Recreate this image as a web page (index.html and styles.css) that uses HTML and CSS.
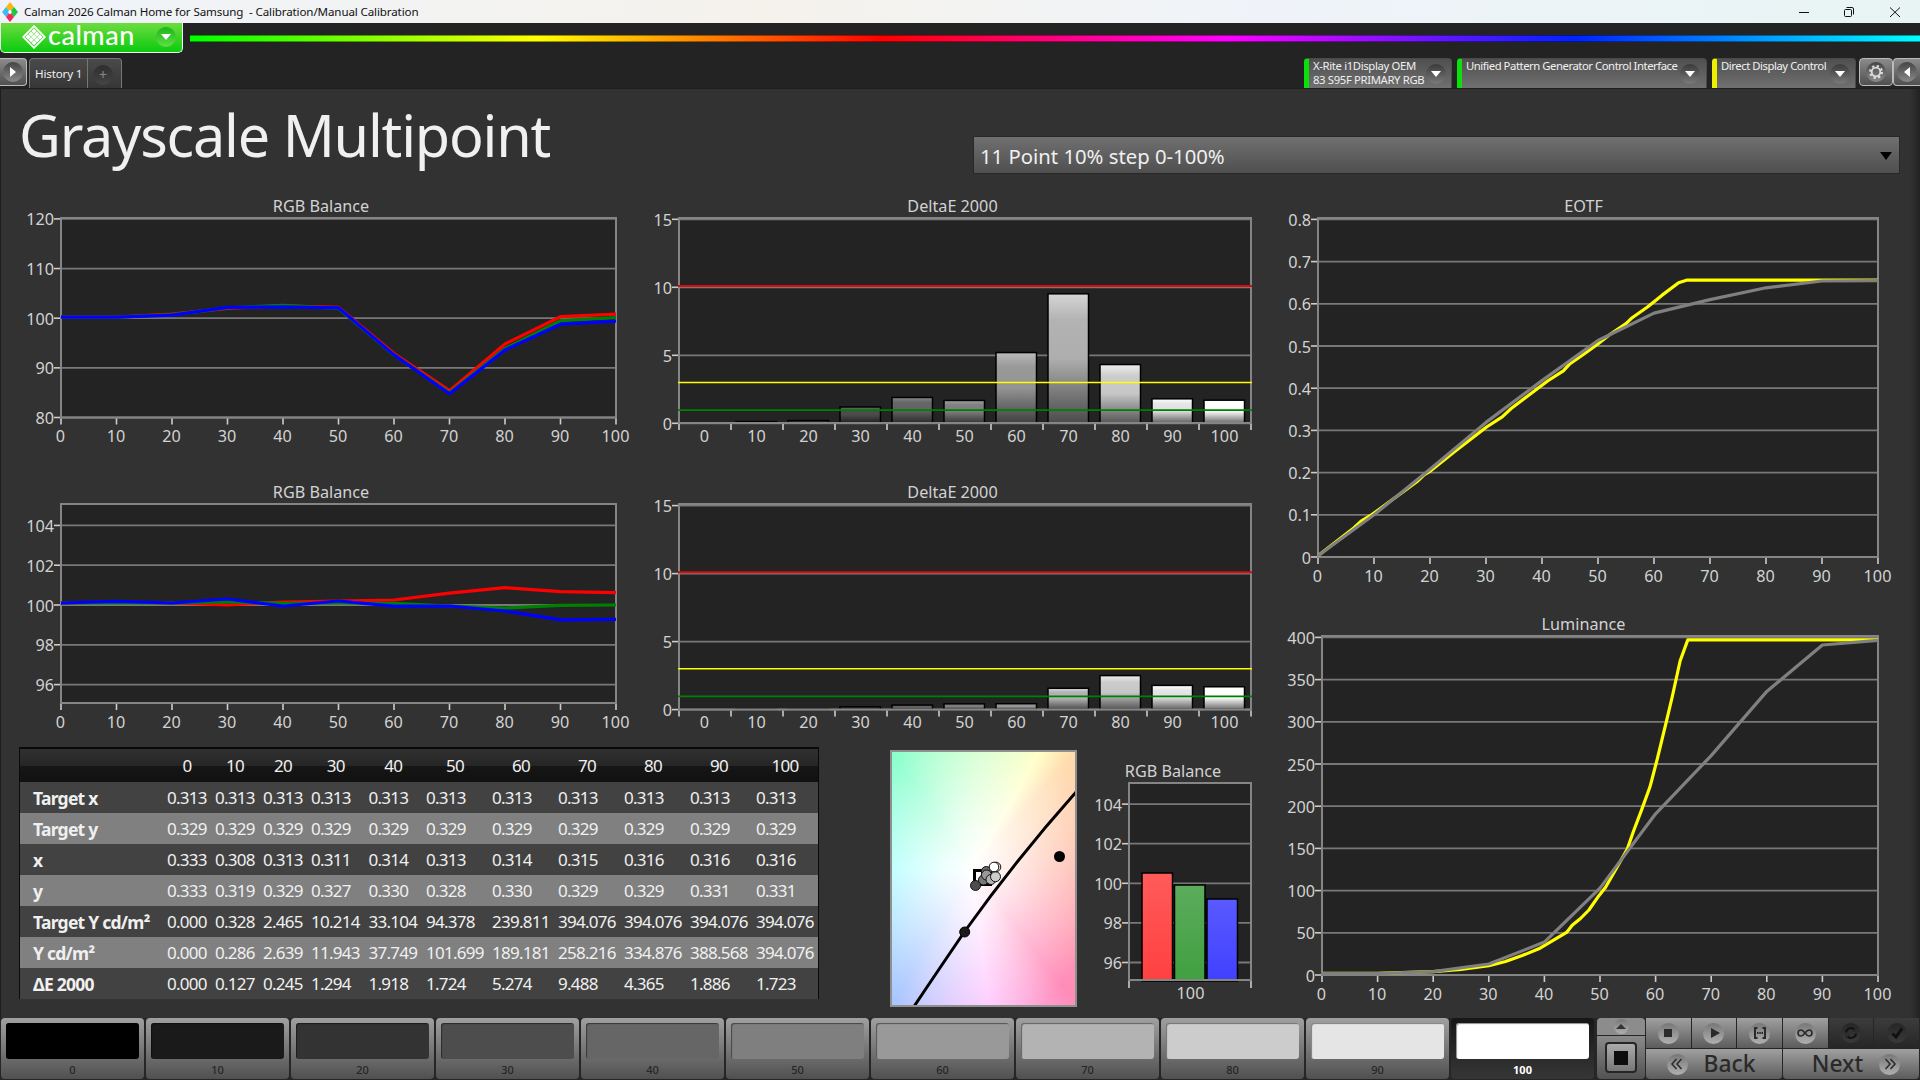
FILE: index.html
```html
<!DOCTYPE html>
<html lang="en">
<head>
    <meta charset="UTF-8">
    <meta name="viewport" content="width=device-width, initial-scale=1.0">
    <title>Calman 2026 Calman Home for Samsung</title>
    <link rel="stylesheet" href="styles.css">
</head>
<body>
    <div class="titlebar">
        <svg class="app-icon" width="16" height="20" viewBox="0 0 16 20">
            <path d="M8 0l4 5-4 5-4-5z" fill="#fbb616"/>
            <path d="M12 5l4 5-4 5-4-5z" fill="#1ec73c"/>
            <path d="M4 5l4 5-4 5-4-5z" fill="#3dbcf0"/>
            <path d="M8 10l4 5-4 5-4-5z" fill="#f0265c"/>
            <path d="M8 7.500l2 2.500-2 2.500-2-2.500z" fill="#fff"/>
        </svg>
        <span class="titlebar-text">Calman 2026 Calman Home for Samsung&nbsp; - Calibration/Manual Calibration</span>
        <svg class="window-buttons" width="110" height="20" viewBox="1795 0 110 20" fill="none" stroke="#111">
            <path d="M1799 10.500h10"/>
            <rect x="1844.500" y="7.500" width="7" height="7" rx="1"/>
            <path d="M1846.500 5.500h5.500a1.500 1.500 0 0 1 1.500 1.500v5.500"/>
            <path d="M1890 5.500l10 9.500M1900 5.500l-10 9.500"/>
        </svg>
    </div>

    <header class="brand-row">
        <div class="brand">
            <svg class="brand-mark" width="24" height="24" viewBox="0 0 24 24">
                <path d="M12 1.200L22.800 12 12 22.800 1.200 12z" fill="none" stroke="#fff" stroke-width="1.800"/>
                <g fill="#fff">
                    <path d="M12 3.500l2.700 2.700L12 8.900 9.300 6.200z"/>
                    <path d="M9 6.500l2.700 2.700L9 11.900 6.300 9.200zM15 6.500l2.700 2.700L15 11.900l-2.700-2.700z"/>
                    <path d="M6 9.300l2.700 2.700L6 14.700 3.300 12zM12 9.300l2.700 2.700-2.700 2.700L9.300 12zM18 9.300l2.700 2.700-2.700 2.700-2.700-2.700z"/>
                    <path d="M9 12.100l2.700 2.700L9 17.500l-2.700-2.700zM15 12.100l2.700 2.700-2.700 2.700-2.700-2.700z"/>
                    <path d="M12 15.100l2.700 2.700-2.700 2.700-2.700-2.700z"/>
                </g>
            </svg>
            <span class="brand-name">calman</span>
            <span class="round green"><i class="tri down"></i></span>
        </div>
        <div class="rainbow"></div>
    </header>

    <nav class="tab-row">
        <div class="side-btn left"><span class="round"><i class="tri right"></i></span></div>
        <div class="tab">History 1</div>
        <div class="tab add"><span class="round dark">+</span></div>
        <div class="devices">
            <div class="device green meter"><p>X-Rite i1Display OEM<br>83 S95F PRIMARY RGB</p><span class="round shade"><i class="tri down"></i></span></div>
            <div class="device green source"><p>Unified Pattern Generator Control Interface</p><span class="round shade"><i class="tri down"></i></span></div>
            <div class="device yellow display"><p>Direct Display Control</p><span class="round shade"><i class="tri down"></i></span></div>
        </div>
        <div class="side-btn gear">
            <span class="round">
                <svg width="16" height="16" viewBox="-8 -8 16 16" fill="none" stroke="#ddd">
                    <circle r="4.300" stroke-width="1.800"/>
                    <circle r="6" stroke-width="2" stroke-dasharray="2.300 2.412"/>
                </svg>
            </span>
        </div>
        <div class="side-btn right"><span class="round"><i class="tri left"></i></span></div>
    </nav>

    <main>
        <section class="page-head">
            <h1>Grayscale Multipoint</h1>
            <div class="select">11 Point 10% step 0-100%<i class="tri down"></i></div>
        </section>

        <section class="board">
            <div class="board-left">
                <div class="chart-row first">
                    <svg id="rgb-top" width="640" height="286" viewBox="0 190 640 286"></svg>
                    <svg id="de-top" width="630" height="286" viewBox="640 190 630 286"></svg>
                </div>
                <div class="chart-row second">
                    <svg id="rgb-bottom" width="640" height="264" viewBox="0 476 640 264"></svg>
                    <svg id="de-bottom" width="630" height="264" viewBox="640 476 630 264"></svg>
                </div>
                <div class="data-row">
                    <table>
                        <thead><tr id="table-head"></tr></thead>
                        <tbody id="table-body"></tbody>
                    </table>
                    <div class="cie">
                        <svg width="183" height="253" viewBox="892 752 183 253">
                            <path d="M913 1008Q935 975 965 931Q1018 857 1077 791" fill="none" stroke="#000" stroke-width="3"/>
                            <circle cx="1059.500" cy="856.500" r="5.500"/>
                            <circle cx="964.700" cy="932" r="5" fill="#1a1a1a" stroke="#000"/>
                            <rect x="974.500" y="870.500" width="16" height="14" fill="none" stroke="#000" stroke-width="3"/>
                            <g stroke="#111" stroke-width="1">
                                <circle cx="975.500" cy="885.500" r="5" fill="#4d4d4d"/>
                                <circle cx="986.300" cy="871.500" r="5" fill="#666"/>
                                <circle cx="983.500" cy="880" r="5" fill="#777"/>
                                <circle cx="986.500" cy="875" r="5" fill="#999"/>
                                <circle cx="991" cy="879.500" r="5" fill="#b2b2b2"/>
                                <circle cx="995.500" cy="876.700" r="5" fill="#ccc"/>
                                <circle cx="996" cy="867" r="4.800" fill="#e5e5e5"/>
                                <circle cx="994" cy="867" r="4.800" fill="#fff"/>
                            </g>
                        </svg>
                    </div>
                    <svg id="rgb-small" width="193" height="278" viewBox="1077 740 193 278"></svg>
                </div>
            </div>
            <div class="board-right">
                <svg id="eotf" width="650" height="410" viewBox="1270 190 650 410"></svg>
                <svg id="luminance" width="650" height="418" viewBox="1270 600 650 418"></svg>
            </div>
        </section>
    </main>

    <footer>
        <div class="patterns" id="patterns"></div>
        <div class="stop-panel">
            <div class="stop-up"><span class="round light"><i class="tri up"></i></span></div>
            <div class="stop-main"><div class="stop-btn"><i></i></div></div>
        </div>
        <div class="controls">
            <div class="ctl"><span class="round light"><svg width="20" height="20" viewBox="0 0 20 20"><rect x="6" y="6" width="8" height="8"/></svg></span></div>
            <div class="ctl"><span class="round light"><svg width="20" height="20" viewBox="0 0 20 20"><path d="M7 5l9 5-9 5z"/></svg></span></div>
            <div class="ctl"><span class="round light"><svg width="20" height="20" viewBox="0 0 20 20"><path d="M7.500 5H5v10h2.500M12.500 5H15v10h-2.500" fill="none" stroke="#2a2a2a" stroke-width="2"/><path d="M7 9h1.500v2H7zM9.300 9h1.500v2H9.300zM11.500 9H13v2h-1.500z"/></svg></span></div>
            <div class="ctl"><span class="round light"><svg width="20" height="20" viewBox="0 0 20 20"><path d="M10 10c-1.500-2-2.500-3-4-3a3 3 0 0 0 0 6c1.500 0 2.500-1 4-3s2.500-3 4-3a3 3 0 0 1 0 6c-1.500 0-2.500-1-4-3z" fill="none" stroke="#2a2a2a" stroke-width="1.600"/></svg></span></div>
            <div class="ctl off"><span class="round dim"><svg width="20" height="20" viewBox="0 0 20 20"><path d="M5 9.500a5 5 0 0 1 8.500-3M15 10.500a5 5 0 0 1-8.500 3" fill="none" stroke="#111" stroke-width="2"/><path d="M15.500 4v5h-5zM4.500 16v-5h5z"/></svg></span></div>
            <div class="ctl off"><span class="round dim"><svg width="20" height="20" viewBox="0 0 20 20"><path d="M5.500 10.500l3.500 3.500 6-8.500" fill="none" stroke="#111" stroke-width="3"/></svg></span></div>
            <div class="nav-btn"><span class="round light"><svg width="20" height="20" viewBox="0 0 20 20"><path d="M9.500 5l-4.500 5 4.500 5M14.500 5L10 10l4.500 5" fill="none" stroke="#2a2a2a" stroke-width="1.500"/></svg></span><b>Back</b></div>
            <div class="nav-btn next"><b>Next</b><span class="round light"><svg width="20" height="20" viewBox="0 0 20 20"><path d="M5.500 5l4.500 5-4.500 5M10.500 5l4.500 5-4.500 5" fill="none" stroke="#2a2a2a" stroke-width="1.500"/></svg></span></div>
        </div>
    </footer>
    <script src="charts.js"></script>
</body>
</html>
```
FILE: styles.css
```css
* {
    margin: 0;
    padding: 0;
    box-sizing: border-box;
}

body {
    width: 1920px;
    height: 1080px;
    overflow: hidden;
    background-color: #232323;
    font-family: "Noto Sans", "Open Sans", sans-serif;
    color: #f0f0f0;
}

svg {
    display: block;
}

/* window title bar */
.titlebar {
    display: flex;
    align-items: center;
    height: 23px;
    padding-left: 2px;
    background: linear-gradient(to right, #eff3f9, #f5f2ec 40%, #eff3f9 66%, #e8f4f4);
    color: #111;
}

.titlebar-text {
    margin-left: 6px;
    font-size: 11.600px;
    letter-spacing: -0.130px;
    white-space: nowrap;
}

.window-buttons {
    margin-left: auto;
    margin-right: 15px;
}

/* round glyph buttons */
.round {
    display: flex;
    align-items: center;
    justify-content: center;
    flex: none;
    width: 20px;
    height: 20px;
    border-radius: 50%;
    background: linear-gradient(#454545, #8b8b8b);
}

.round.green {
    background: linear-gradient(#1bb51b, #5fe043);
}

.round.shade {
    background: linear-gradient(#3a3a3a, #7a7a7a);
}

.round.dark {
    background: linear-gradient(#2e2e2e, #454545);
    color: #888;
    font-size: 14px;
    line-height: 20px;
}

.round.light {
    width: 21px;
    height: 21px;
    background: linear-gradient(#777, #b0b0b0);
}

.round.dim {
    background: linear-gradient(#262626, #3a3a3a);
}

.tri {
    width: 0;
    height: 0;
    border: 5px solid transparent;
}

.tri.down {
    border-top: 6px solid #fff;
    border-bottom: 0;
}

.tri.up {
    border-bottom: 5px solid #333;
    border-top: 0;
}

.tri.right {
    border-left: 6px solid #fff;
    border-right: 0;
}

.tri.left {
    border-right: 6px solid #fff;
    border-left: 0;
}

/* logo and colour strip */
.brand-row {
    display: flex;
    height: 35px;
}

.brand {
    display: flex;
    align-items: center;
    width: 183px;
    height: 30px;
    padding: 0 6px 1px 21px;
    border: 1px solid #e9ffe9;
    border-top: 0;
    border-radius: 0 0 5px 5px;
    background: linear-gradient(#6ddc3e, #0bca10);
}

.brand-name {
    margin: -4px auto 0 2px;
    font-family: "Lato", sans-serif;
    font-weight: 500;
    font-size: 27px;
    line-height: 28px;
    letter-spacing: 0.500px;
    color: #fff;
}

.rainbow {
    flex: 1;
    height: 7px;
    margin: 12px 0 0 7px;
    border: 1px solid rgba(0, 0, 0, 0.4);
    border-width: 1px 0;
    background: linear-gradient(to right, #0f0, #ff0, #f00, #f0f, #0022ff, #0ff);
    background-origin: border-box;
}

/* tabs and devices */
.tab-row {
    display: flex;
    height: 30px;
    font-size: 12px;
}

.side-btn {
    display: flex;
    align-items: center;
    justify-content: center;
    height: 28px;
    border: 1px solid #bbb;
    border-radius: 4px;
    background: linear-gradient(#8b8b8b, #505050);
}

.side-btn.left {
    width: 27px;
    border-left: 0;
    border-radius: 0 4px 4px 0;
    margin-right: 2px;
}

.side-btn.gear {
    width: 34px;
    margin-left: 3px;
}

.side-btn.right {
    width: 27px;
    border-right: 0;
    border-radius: 4px 0 0 4px;
}

.tab {
    width: 59px;
    height: 30px;
    line-height: 30px;
    padding-left: 5px;
    border: 1px solid #777;
    border-bottom: 0;
    border-radius: 4px 0 0 0;
    background: linear-gradient(#4a4a4a, #363636);
    font-size: 11.600px;
    letter-spacing: -0.150px;
    white-space: nowrap;
}

.tab.add {
    width: 34px;
    padding: 6px 0 0 5px;
    border-left: 0;
    border-radius: 0 4px 0 0;
}

.tab.add .round {
    padding-bottom: 1px;
}

.devices {
    display: flex;
    gap: 5px;
    margin-left: auto;
}

.device {
    display: flex;
    justify-content: space-between;
    height: 30px;
    padding: 0 5px 0 4px;
    border: 1px solid #4a4a4a;
    border-bottom: 0;
    border-left: 5px solid #0be00b;
    border-radius: 4px 4px 0 0;
    background: linear-gradient(#4f4f4f, #707070);
    font-size: 11.300px;
    line-height: 14px;
    letter-spacing: -0.450px;
    white-space: nowrap;
}

.device .round {
    margin-top: 5px;
}

.device.yellow {
    border-left-color: #eeee00;
}

.meter {
    width: 148px;
}

.meter p {
    letter-spacing: -0.350px;
}

.source {
    width: 250px;
}

/* page */
.source {
    padding-right: 6px;
}

.display {
    width: 144px;
}

main {
    height: 930px;
    border-top: 1px solid #1e1e1e;
    border-left: 1px solid #1e1e1e;
    background: linear-gradient(to right, transparent 1909px, #222) #323232;
}

.page-head {
    display: flex;
    justify-content: space-between;
    height: 101px;
    padding: 0 20px 0 18px;
}

h1 {
    margin-top: 6px;
    font-weight: 400;
    font-size: 57.500px;
    line-height: 80px;
    letter-spacing: -1.200px;
}

.select {
    display: flex;
    align-items: center;
    justify-content: space-between;
    width: 927px;
    height: 38px;
    margin-top: 47px;
    padding: 1px 7px 0 6px;
    border: 1px solid #282828;
    background: linear-gradient(#707070, #4f4f4f);
    font-size: 20.300px;
}

.select .tri {
    border-width: 8px 6px 0;
    border-top-color: #000;
}

.board {
    display: flex;
    margin-left: -1px;
}

.board-left {
    width: 1270px;
}

.chart-row {
    display: flex;
}

.data-row {
    display: flex;
    height: 278px;
}

/* chart drawing */
svg text {
    font-size: 16.200px;
    fill: #d2d2d2;
}

.plot {
    fill: #232323;
}

.frame {
    fill: none;
    stroke: #858585;
    stroke-width: 2;
}

.grid {
    stroke: #787878;
    stroke-width: 1.800;
}

.tick {
    stroke: #ccc;
    stroke-width: 1.600;
}

.curve {
    fill: none;
    stroke-width: 3.200;
    stroke-linejoin: round;
}

/* readings table */
table {
    width: 800px;
    height: 252px;
    margin: 7px 0 0 19px;
    border: 1px solid #0a0a0a;
    border-top-width: 2px;
    border-bottom: 0;
    border-collapse: separate;
    border-spacing: 0;
    table-layout: fixed;
    flex: none;
    font-size: 17px;
    line-height: 20px;
}

thead tr {
    height: 33px;
    background: linear-gradient(#303030, #262626 50%, #161616 51%, #111);
}

th {
    padding-top: 1px;
    font-weight: 400;
    letter-spacing: -0.700px;
}

tbody tr {
    height: 31px;
    background-color: #424242;
}

tbody tr:nth-child(even) {
    background-color: #808080;
}

td {
    padding: 1px 0 0 4px;
    letter-spacing: -0.720px;
    white-space: nowrap;
}

td.name {
    padding-left: 13px;
    font-weight: 700;
    font-size: 17.500px;
    letter-spacing: -0.750px;
}

/* chromaticity view */
.cie {
    width: 187px;
    height: 257px;
    margin: 10px 0 0 71px;
    border: 2px solid #909090;
    flex: none;
    background:
        radial-gradient(ellipse 125px 165px at 80px 118px, #fff, rgba(255, 255, 255, 0.800) 25%, rgba(255, 255, 255, 0) 100%),
        conic-gradient(from 0deg at 80px 118px, #c4ffc4, #ffffc0 30deg, #ffdcae 41deg, #ffb8ac 90deg, #ff8cb8 142deg, #ffc4ff 173deg, #a8c6ff 211deg, #9cffff 270deg, #80ffc8 326deg, #c4ffc4 360deg);
}

/* pattern bar */
footer {
    display: flex;
    height: 62px;
    background-color: #262626;
}

.patterns {
    display: flex;
    gap: 2px;
    padding-left: 1px;
    margin-right: 3px;
}

.pattern {
    width: 143px;
    height: 61px;
    padding: 5px;
    border-radius: 4px;
    background: linear-gradient(#a0a0a0, #505050);
    color: #262626;
    font-size: 11px;
    font-weight: 500;
    line-height: 21px;
    text-align: center;
}

.swatch {
    height: 36px;
    border-radius: 3px;
    box-shadow: inset 1px 1px 1px rgba(0, 0, 0, 0.450);
}

.pattern.active {
    background: linear-gradient(#161616, #363636);
    color: #fff;
    font-weight: 700;
}

.stop-panel {
    width: 48px;
    height: 61px;
    margin-right: 1px;
}

.stop-up {
    display: flex;
    justify-content: center;
    align-items: center;
    height: 17px;
    border-radius: 4px 4px 0 0;
    background-color: #8c8c8c;
}

.stop-up .round {
    width: 15px;
    height: 15px;
}

.stop-main {
    height: 43px;
    margin-top: 1px;
    padding: 6px 8px;
    border-radius: 0 0 4px 4px;
    background: linear-gradient(#8a8a8a, #525252);
}

.stop-btn {
    display: flex;
    align-items: center;
    justify-content: center;
    width: 32px;
    height: 31px;
    border: 2px solid #262626;
    border-radius: 4px;
    background: linear-gradient(#aaa, #777);
}

.stop-btn i {
    width: 14px;
    height: 14px;
    background-color: #0c0c0c;
}

.controls {
    display: grid;
    grid-template-columns: repeat(6, 1fr);
    grid-template-rows: 30px 30px;
    gap: 1px;
    width: 273px;
    height: 61px;
}

.ctl,
.nav-btn {
    display: flex;
    align-items: center;
    justify-content: center;
    background: linear-gradient(#a0a0a0, #5c5c5c);
}

.ctl svg {
    fill: #2a2a2a;
}

.ctl.off {
    background: linear-gradient(#3c3c3c, #262626);
}

.nav-btn {
    grid-column: span 3;
    gap: 16px;
    padding-right: 6px;
    color: #2a2a2a;
    border-radius: 0 0 4px 4px;
}

.nav-btn.next {
    padding: 0 0 0 10px;
}

.nav-btn b {
    font-size: 22.800px;
    font-weight: 500;
    line-height: 30px;
}
```
FILE: charts.js
```js
var LEVELS = [0, 10, 20, 30, 40, 50, 60, 70, 80, 90, 100];
var NS = 'http://www.w3.org/2000/svg';

function add(svg, tag, attrs, text) {
    var el = document.createElementNS(NS, tag);
    for (var key in attrs) {
        el.setAttribute(key, attrs[key]);
    }
    if (text !== undefined) {
        el.textContent = text;
    }
    svg.appendChild(el);
    return el;
}

// frame, grid, ticks and labels shared by every chart
function drawBase(svg, c) {
    add(svg, 'text', { x: c.titleX, y: c.top - 6, 'text-anchor': 'middle' }, c.title);
    add(svg, 'rect', { 'class': 'plot', x: c.left, y: c.top, width: c.right - c.left, height: c.bottom - c.top });
    c.rows.forEach(function (r) {
        var y = c.y(r);
        add(svg, 'line', { 'class': 'grid', x1: c.left, x2: c.right, y1: y, y2: y });
        add(svg, 'line', { 'class': 'tick', x1: c.left - 7, x2: c.left - 1, y1: y, y2: y });
        add(svg, 'text', { x: c.left - 7, y: y + 6.5, 'text-anchor': 'end' }, r);
    });
}

function drawFrame(svg, c) {
    add(svg, 'rect', { 'class': 'frame', x: c.left, y: c.top, width: c.right - c.left, height: c.bottom - c.top });
}

function drawLines(id, c) {
    var svg = document.getElementById(id);
    var step = (c.right - c.left) / 100;
    drawBase(svg, c);
    drawFrame(svg, c);
    LEVELS.forEach(function (l) {
        var x = c.left + l * step;
        add(svg, 'line', { 'class': 'tick', x1: x, x2: x, y1: c.bottom + 1, y2: c.bottom + 7 });
        add(svg, 'text', { x: x - 0.5, y: c.bottom + 24.5, 'text-anchor': 'middle' }, l);
    });
    c.series.forEach(function (s) {
        var pts = s.data.map(function (p, i) {
            var px = p.length ? p[0] : i * 10;
            var py = p.length ? p[1] : p;
            return (c.left + px * step).toFixed(1) + ',' + c.y(py).toFixed(1);
        });
        add(svg, 'polyline', { 'class': 'curve', points: pts.join(' '), stroke: s.color });
    });
}

function scale(zero, perUnit, base) {
    return function (v) {
        return zero - (v - (base || 0)) * perUnit;
    };
}

drawLines('rgb-top', {
    title: 'RGB Balance', titleX: 321, left: 61, right: 616, top: 218, bottom: 417.5,
    rows: [80, 90, 100, 110, 120], y: scale(417.5, 4.965, 80),
    series: [
        { color: '#f00', data: [100.2, 100.2, 100.8, 102, 102.5, 102.2, 92.9, 85.4, 94.8, 100.3, 100.8] },
        { color: '#008000', data: [100.2, 100.2, 100.7, 102.1, 102.6, 102, 92.6, 85, 93.9, 99.5, 100.1] },
        { color: '#00f', data: [100.2, 100.2, 100.6, 102.2, 102.3, 102.1, 92.6, 84.8, 93.6, 98.8, 99.4] }
    ]
});

drawLines('rgb-bottom', {
    title: 'RGB Balance', titleX: 321, left: 61, right: 616, top: 504, bottom: 703,
    rows: [96, 98, 100, 102, 104], y: scale(605, 19.9, 100),
    series: [
        { color: '#f00', data: [100.1, 100.15, 100.1, 100, 100.15, 100.2, 100.25, 100.6, 100.87, 100.67, 100.62] },
        { color: '#008000', data: [100.1, 100.1, 100.1, 100.15, 100.08, 100.1, 100.08, 99.95, 99.85, 99.98, 100] },
        { color: '#00f', data: [100.1, 100.18, 100.1, 100.3, 99.95, 100.2, 99.94, 99.95, 99.7, 99.25, 99.28] }
    ]
});

drawLines('eotf', {
    title: 'EOTF', titleX: 1583.5, left: 1318, right: 1878, top: 218, bottom: 557,
    rows: [0, 0.1, 0.2, 0.3, 0.4, 0.5, 0.6, 0.7, 0.8], y: scale(557, 422),
    series: [
        { color: '#ff0', data: [[0, 0.003], [4.2, 0.046], [6.4, 0.069], [7.7, 0.085], [9.7, 0.101], [17.7, 0.179], [19, 0.195], [20, 0.203], [24.3, 0.249], [30.1, 0.308], [32.9, 0.332], [34.5, 0.352], [37.4, 0.381], [41, 0.417], [43.8, 0.441], [45, 0.458], [47.2, 0.478], [49.8, 0.503], [52, 0.526], [55, 0.553], [56.1, 0.567], [58.9, 0.593], [61.4, 0.62], [64.4, 0.65], [65.8, 0.656], [100, 0.656]] },
        { color: '#808080', data: [0.003, 0.1, 0.208, 0.319, 0.418, 0.513, 0.578, 0.61, 0.638, 0.654, 0.655] }
    ]
});

drawLines('luminance', {
    title: 'Luminance', titleX: 1583.5, left: 1322, right: 1878, top: 636, bottom: 975,
    rows: [0, 50, 100, 150, 200, 250, 300, 350, 400], y: scale(975, 0.844),
    series: [
        { color: '#ff0', data: [[0, 2], [10, 2], [20, 4], [25, 6.5], [30, 11], [33, 16], [36, 23], [39, 31], [44, 50.5], [45, 59], [46.5, 67], [48, 77], [49.8, 94], [51, 104], [53, 127], [54.9, 149], [56, 170], [57.5, 196], [59, 223], [60.3, 256], [62, 302], [63, 330], [64.4, 372], [65.8, 397], [100, 397]] },
        { color: '#808080', data: [1.5, 1.5, 4, 13, 39, 103, 191, 260, 336, 391, 396.5] }
    ]
});

function drawBars(id, c) {
    var svg = document.getElementById(id);
    var slot = (c.right - c.left) / 11;
    var defs = add(svg, 'defs', {});
    drawBase(svg, c);
    c.values.forEach(function (v, i) {
        var g = Math.round(i * 25.5);
        var grad = add(defs, 'linearGradient', { id: id + i, x1: 0, y1: 0, x2: 0, y2: 1 });
        var hi = Math.min(255, g + 34);
        var lo = Math.round(g * 0.42);
        [[0, hi], [0.2, g], [0.5, Math.round(g * 0.97)], [1, lo]].forEach(function (s) {
            add(grad, 'stop', { offset: s[0], 'stop-color': 'rgb(' + [s[1], s[1], s[1]] + ')' });
        });
        if (v > 0) {
            add(svg, 'rect', {
                x: c.left + i * slot + 5, y: c.y(v), width: 40.5, height: c.bottom - c.y(v),
                fill: 'url(#' + id + i + ')', stroke: '#000', 'stroke-width': 1.5
            });
        }
        add(svg, 'text', { x: c.left + i * slot + 25.5, y: c.labelY, 'text-anchor': 'middle' }, i * 10);
    });
    for (var k = 0; k <= 11; k++) {
        var x = c.left + k * slot;
        add(svg, 'line', { 'class': 'tick', x1: x, x2: x, y1: c.bottom + 1, y2: c.bottom + 7 });
    }
    drawFrame(svg, c);
    [[10.1, '#d80c0c', 2], [3, '#ff0', 1.6], [0.97, '#008000', 1.8]].forEach(function (l) {
        add(svg, 'line', { x1: c.left - 1, x2: c.right + 1, y1: c.y(l[0]), y2: c.y(l[0]), stroke: l[1], 'stroke-width': l[2] });
    });
}

drawBars('de-top', {
    title: 'DeltaE 2000', titleX: 952.5, left: 679, right: 1251, top: 218, bottom: 423, labelY: 441.5,
    rows: [0, 5, 10, 15], y: scale(423.3, 13.6),
    values: [0, 0.127, 0.2, 1.2, 1.9, 1.68, 5.2, 9.52, 4.32, 1.8, 1.7]
});

drawBars('de-bottom', {
    title: 'DeltaE 2000', titleX: 952.5, left: 679, right: 1251, top: 504, bottom: 709.5, labelY: 727.5,
    rows: [0, 5, 10, 15], y: scale(709.6, 13.6),
    values: [0, 0.03, 0.03, 0.2, 0.33, 0.42, 0.43, 1.57, 2.5, 1.78, 1.68]
});

// single level balance
(function () {
    var svg = document.getElementById('rgb-small');
    var c = {
        title: 'RGB Balance', titleX: 1173, left: 1129, right: 1251, top: 783, bottom: 980,
        rows: [96, 98, 100, 102, 104], y: scale(883.3, 19.8, 100)
    };
    drawBase(svg, c);
    [[1142, 873, '#ff5a5a', '#ff4040'], [1174.5, 885, '#5cac5c', '#40a040'], [1207, 899, '#5a5aff', '#4040ff']].forEach(function (b, i) {
        var grad = add(svg, 'linearGradient', { id: 'small' + i, x1: 0, y1: 0, x2: 0, y2: 1 });
        add(grad, 'stop', { offset: 0, 'stop-color': b[2] });
        add(grad, 'stop', { offset: 1, 'stop-color': b[3] });
        add(svg, 'rect', { x: b[0], y: b[1], width: 30.5, height: 981 - b[1], fill: 'url(#small' + i + ')', stroke: '#000', 'stroke-width': 1.5 });
    });
    drawFrame(svg, c);
    [1129, 1251].forEach(function (x) {
        add(svg, 'line', { 'class': 'tick', x1: x, x2: x, y1: 981, y2: 988 });
    });
    add(svg, 'text', { x: 1190.5, y: 998.5, 'text-anchor': 'middle' }, '100');
})();

// readings table
var widths = [143, 48, 48, 48, 57.5, 57.5, 66, 66, 66, 66, 66, 66];
document.getElementById('table-head').innerHTML = widths.map(function (w, i) {
    return '<th style="width:' + w + 'px">' + (i ? LEVELS[i - 1] : '') + '</th>';
}).join('');

var rows = [
    ['Target x', '0.313 0.313 0.313 0.313 0.313 0.313 0.313 0.313 0.313 0.313 0.313'],
    ['Target y', '0.329 0.329 0.329 0.329 0.329 0.329 0.329 0.329 0.329 0.329 0.329'],
    ['x', '0.333 0.308 0.313 0.311 0.314 0.313 0.314 0.315 0.316 0.316 0.316'],
    ['y', '0.333 0.319 0.329 0.327 0.330 0.328 0.330 0.329 0.329 0.331 0.331'],
    ['Target Y cd/m²', '0.000 0.328 2.465 10.214 33.104 94.378 239.811 394.076 394.076 394.076 394.076'],
    ['Y cd/m²', '0.000 0.286 2.639 11.943 37.749 101.699 189.181 258.216 334.876 388.568 394.076'],
    ['ΔE 2000', '0.000 0.127 0.245 1.294 1.918 1.724 5.274 9.488 4.365 1.886 1.723']
];
document.getElementById('table-body').innerHTML = rows.map(function (r) {
    return '<tr><td class="name">' + r[0] + '</td>' + r[1].split(' ').map(function (v) {
        return '<td>' + v + '</td>';
    }).join('') + '</tr>';
}).join('');

// pattern buttons
document.getElementById('patterns').innerHTML = LEVELS.map(function (l) {
    var g = Math.round(l * 2.55);
    return '<div class="pattern' + (l === 100 ? ' active' : '') + '"><div class="swatch" style="background-color:rgb(' + [g, g, g] + ')"></div>' + l + '</div>';
}).join('');
```
